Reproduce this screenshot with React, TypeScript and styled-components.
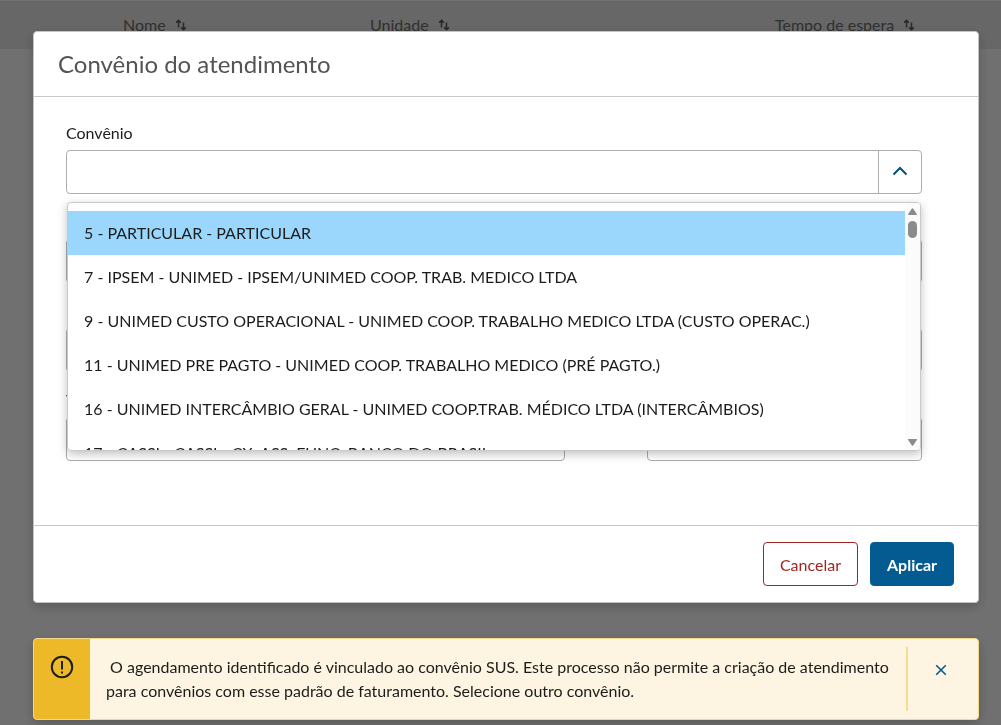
import React, { useState } from "react";
import styled, { createGlobalStyle, css } from "styled-components";

const GlobalStyle = createGlobalStyle`
  *, *::before, *::after { box-sizing: border-box; }
  body {
    margin: 0;
    background: #ffffff;
    color: #1c1c1c;
    font-family: Lato, "Liberation Sans", sans-serif;
    font-size: 16px;
    line-height: 24px;
    text-rendering: optimizeLegibility;
  }
  button, input { font: inherit; color: inherit; text-rendering: inherit; }
`;

const Page = styled.div`
  min-height: 100vh;
  padding-top: 1px;
`;

const DataTable = styled.table`
  width: 100%;
  table-layout: fixed;
  border-collapse: collapse;
`;

const HeadCell = styled.th<{ $width?: number }>`
  width: ${(p) => (p.$width ? `${p.$width}px` : "auto")};
  height: 48px;
  padding: 0 16px;
  background: #ebebeb;
  color: #6e6e6e;
  font-weight: 400;
  text-align: left;
`;

const SortButton = styled.button`
  display: inline-flex;
  align-items: center;
  gap: 9px;
  padding: 0;
  border: 0;
  background: none;
  white-space: nowrap;
`;

const Overlay = styled.div`
  position: fixed;
  inset: 0;
  display: flex;
  flex-direction: column;
  gap: 35px;
  padding: 31px 22px 0 33px;
  overflow: hidden;
  background: rgba(0, 0, 0, 0.56);
`;

const Dialog = styled.section`
  border: 1px solid #c4c4c4;
  border-radius: 4px;
  background: #ffffff;
  box-shadow: 0 4px 12px rgba(0, 0, 0, 0.2);
`;

const DialogHeader = styled.header`
  padding: 16px 24px;
  border-bottom: 1px solid #c9c9c9;
`;

const DialogTitle = styled.h2`
  margin: 0;
  color: #545454;
  font-size: 24px;
  font-weight: 400;
  line-height: 32px;
`;

const DialogBody = styled.div`
  display: flex;
  flex-direction: column;
  gap: 16px;
  padding: 24px 56px 64px 32px;
`;

const DialogFooter = styled.footer`
  display: flex;
  justify-content: flex-end;
  gap: 12px;
  padding: 16px 24px;
  border-top: 1px solid #c9c9c9;
`;

const ActionButton = styled.button<{ $primary?: boolean }>`
  height: 44px;
  padding: 2px 16px 0;
  border-radius: 4px;
  ${(p) =>
    p.$primary
      ? css`
          border: 1px solid #045b92;
          background: #045b92;
          color: #ffffff;
          font-weight: 700;
        `
      : css`
          border: 1px solid #a02622;
          background: #ffffff;
          color: #a02622;
        `}
`;

const FieldRow = styled.div`
  display: grid;
  grid-template-columns: 499fr 275fr;
  gap: 82px;
`;

const Field = styled.div`
  position: relative;
  display: flex;
  flex-direction: column;
  gap: 5px;
`;

const TextInput = styled.input`
  width: 100%;
  height: 44px;
  padding: 0 16px;
  border: 1px solid #adadad;
  border-radius: 4px;
  background: #ffffff;
  outline: none;
`;

const Combo = styled.div`
  display: flex;
  height: 44px;
  border: 1px solid #adadad;
  border-radius: 4px;
`;

const ComboInput = styled.input`
  flex: 1;
  min-width: 0;
  padding: 0 16px;
  border: 0;
  background: none;
  outline: none;
`;

const ComboToggle = styled.button`
  display: grid;
  place-items: center;
  width: 43px;
  padding: 0;
  border: 0;
  border-left: 1px solid #adadad;
  background: none;
  color: #045081;
`;

const Menu = styled.div`
  position: absolute;
  z-index: 1;
  top: 81px;
  left: 1px;
  right: 1px;
  display: flex;
  height: 249px;
  border: 1px solid #c9c9c9;
  border-radius: 4px;
  background: #ffffff;
  box-shadow: 0 3px 10px rgba(0, 0, 0, 0.25);
  overflow: hidden;
`;

const OptionList = styled.ul`
  flex: 1;
  min-width: 0;
  margin: 0;
  padding: 8px 0;
  list-style: none;
`;

const Option = styled.li`
  padding: 10px 16px;
  white-space: nowrap;
  &[aria-selected="true"] { background: #9bd7fd; }
`;

const ScrollTrack = styled.div`
  display: flex;
  flex-direction: column;
  align-items: center;
  width: 15px;
  padding: 5px 0 4px;
  background: #fbfbfb;
  color: #8b8b8b;
`;

const ScrollThumb = styled.div`
  width: 9px;
  height: 17px;
  margin: 6px 0 auto;
  border-radius: 5px;
  background: currentColor;
`;

const Toast = styled.div`
  display: flex;
  border: 1px solid #f5d78b;
  border-radius: 4px;
  background: #fdf5e1;
  box-shadow: 0 4px 12px rgba(0, 0, 0, 0.2);
  overflow: hidden;
`;

const ToastIcon = styled.div`
  flex: none;
  width: 56px;
  padding: 16px;
  background: #eeb929;
`;

const ToastText = styled.p`
  flex: 1;
  margin: 0;
  padding: 16px;
`;

const ToastClose = styled.button`
  flex: none;
  display: flex;
  justify-content: center;
  width: 72px;
  margin: 8px 0;
  padding: 17px 4px 0 0;
  border: 0;
  border-left: 2px solid #f6db93;
  background: none;
  color: #045b92;
`;

const SortIcon = () => (
  <svg width="12" height="12" viewBox="0 0 12 12" fill="none" stroke="#5a5a5a" strokeWidth="1.5" aria-hidden="true">
    <path d="M3.5 8.5V1.5M1.2 3.6L3.5 1.3L5.8 3.6M8.5 3.5V10.5M6.2 8.4L8.5 10.7L10.8 8.4" />
  </svg>
);

const ChevronUp = () => (
  <svg width="16" height="12" viewBox="0 0 16 12" fill="none" stroke="currentColor" strokeWidth="2" aria-hidden="true">
    <path d="M1.5 8.5L8 2L14.5 8.5" />
  </svg>
);

const ScrollArrow = ({ down = false }: { down?: boolean }) => (
  <svg width="9" height="7" viewBox="0 0 9 7" fill="currentColor" aria-hidden="true">
    <path d={down ? "M0.5 0H8.5Q9.3 0.3 8.8 1L5.3 6.2Q4.5 7.2 3.7 6.2L0.2 1Q-0.3 0.3 0.5 0Z" : "M0.5 7H8.5Q9.3 6.7 8.8 6L5.3 0.8Q4.5 -0.2 3.7 0.8L0.2 6Q-0.3 6.7 0.5 7Z"} />
  </svg>
);

const WarningIcon = () => (
  <svg width="24" height="24" viewBox="0 0 24 24" fill="none" stroke="#1c1c1c" strokeWidth="2" aria-hidden="true">
    <circle cx="12" cy="12" r="10.2" />
    <path d="M12 6V14.5M12 16.5V18.5" />
  </svg>
);

const CloseIcon = () => (
  <svg width="12" height="12" viewBox="0 0 12 12" fill="none" stroke="currentColor" strokeWidth="1.6" aria-hidden="true">
    <path d="M1.2 1.2L10.8 10.8M10.8 1.2L1.2 10.8" />
  </svg>
);

const options = [
  "5 - PARTICULAR - PARTICULAR",
  "7 - IPSEM - UNIMED - IPSEM/UNIMED COOP. TRAB. MEDICO LTDA",
  "9 - UNIMED CUSTO OPERACIONAL - UNIMED COOP. TRABALHO MEDICO LTDA (CUSTO OPERAC.)",
  "11 - UNIMED PRE PAGTO - UNIMED COOP. TRABALHO MEDICO (PRÉ PAGTO.)",
  "16 - UNIMED INTERCÂMBIO GERAL - UNIMED COOP.TRAB. MÉDICO LTDA (INTERCÂMBIOS)",
  "17 - CASSI - CASSI - CX. ASS. FUNC. BANCO DO BRASIL",
];

const LabeledInput = ({ id, label }: { id: string; label: string }) => (
  <Field>
    <label htmlFor={id}>{label}</label>
    <TextInput id={id} type="text" />
  </Field>
);

export default function App() {
  const [open, setOpen] = useState(true);
  const [query, setQuery] = useState("");

  return (
    <>
      <GlobalStyle />
      <Page>
        <DataTable>
          <thead>
            <tr>
              <HeadCell $width={107} />
              <HeadCell $width={247}><SortButton type="button">Nome<SortIcon /></SortButton></HeadCell>
              <HeadCell $width={405}><SortButton type="button">Unidade<SortIcon /></SortButton></HeadCell>
              <HeadCell><SortButton type="button">Tempo de espera<SortIcon /></SortButton></HeadCell>
            </tr>
          </thead>
        </DataTable>
      </Page>
      <Overlay>
        <Dialog role="dialog" aria-modal="true" aria-labelledby="dialog-title">
          <DialogHeader>
            <DialogTitle id="dialog-title">Convênio do atendimento</DialogTitle>
          </DialogHeader>
          <DialogBody>
            <Field>
              <label htmlFor="convenio">Convênio</label>
              <Combo>
                <ComboInput
                  id="convenio"
                  role="combobox"
                  aria-expanded={open}
                  aria-controls="convenio-options"
                  value={query}
                  onChange={(e) => setQuery(e.target.value)}
                />
                <ComboToggle type="button" aria-label="Alternar lista" onClick={() => setOpen(!open)}>
                  <ChevronUp />
                </ComboToggle>
              </Combo>
              {open && (
                <Menu>
                  <OptionList id="convenio-options" role="listbox">
                    {options.map((name, i) => (
                      <Option key={name} role="option" aria-selected={i === 0} onClick={() => setQuery(name)}>
                        {name}
                      </Option>
                    ))}
                  </OptionList>
                  <ScrollTrack>
                    <ScrollArrow />
                    <ScrollThumb />
                    <ScrollArrow down />
                  </ScrollTrack>
                </Menu>
              )}
            </Field>
            <LabeledInput id="plano" label="Plano" />
            <LabeledInput id="matricula" label="Matrícula" />
            <FieldRow>
              <LabeledInput id="titular" label="Titular" />
              <LabeledInput id="validade" label="Validade" />
            </FieldRow>
          </DialogBody>
          <DialogFooter>
            <ActionButton type="button">Cancelar</ActionButton>
            <ActionButton type="button" $primary>Aplicar</ActionButton>
          </DialogFooter>
        </Dialog>
        <Toast role="alert">
          <ToastIcon><WarningIcon /></ToastIcon>
          <ToastText>
            &nbsp;O agendamento identificado é vinculado ao convênio SUS. Este processo não permite a criação de atendimento
            para convênios com esse padrão de faturamento. Selecione outro convênio.
          </ToastText>
          <ToastClose type="button" aria-label="Fechar"><CloseIcon /></ToastClose>
        </Toast>
      </Overlay>
    </>
  );
}
